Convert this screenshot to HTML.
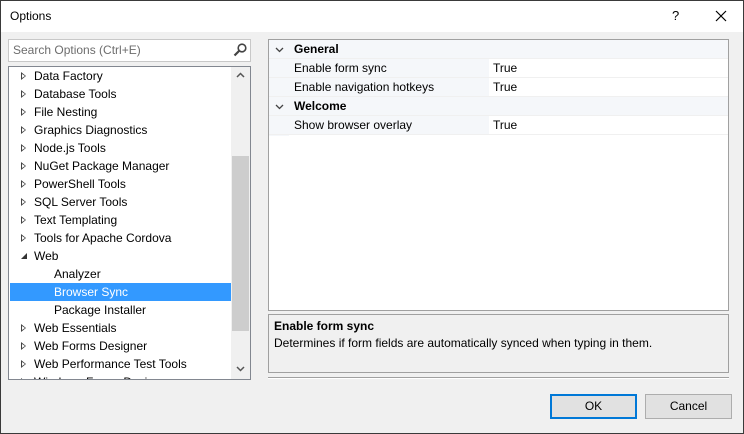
<!DOCTYPE html>
<html><head><style>
*{margin:0;padding:0;box-sizing:border-box}
body{width:744px;height:434px;overflow:hidden;font-family:"Liberation Sans",sans-serif;font-size:12px;color:#000;background:#f0f0f0;position:relative}
.win{position:absolute;left:0;top:0;width:744px;height:434px;border:1px solid #3a3a3a;background:#f0f0f0}
.title{position:absolute;left:0;top:0;width:742px;height:31px;background:#fff}
.abs{position:absolute}
.search{left:8px;top:39px;width:243px;height:23px;border:1px solid #c8c8c8;background:#fff;color:#6d6d6d;padding:3px 0 0 4px}
.tree{left:8px;top:66px;width:243px;height:314px;border:1px solid #828790;background:#fff;overflow:hidden}
.row{position:absolute;left:1px;width:221px;height:18px;line-height:18px}
.row .t{position:absolute;left:24px}
.row.c .t{left:44px}
.row .a{position:absolute;left:11px;top:5px;width:0;height:0;border-left:5px solid #444;border-top:4px solid transparent;border-bottom:4px solid transparent}
.row .a::after{content:"";position:absolute;left:-4px;top:-2px;border-left:3px solid #fff;border-top:2px solid transparent;border-bottom:2px solid transparent}
.sel{background:#3399ff;color:#fff}
.sb{position:absolute;left:222px;top:0;width:19px;height:312px;background:#f0f0f0}
.thumb{position:absolute;left:223px;top:89px;width:17px;height:175px;background:#cdcdcd}
.grid{left:268px;top:39px;width:461px;height:272px;border:1px solid #a0a0a0;background:#fff}
.gr{position:absolute;left:0;width:459px;height:19px;line-height:19px;border-bottom:1px solid #f0f0f0}
.hdr{background:#f5f7fa;font-weight:bold}
.nm{position:absolute;left:20px;width:200px;height:18px;background:#f5f7fa;padding-left:5px}
.vl{position:absolute;left:221px;padding-left:3px}
.desc{left:268px;top:314px;width:461px;height:59px;border:1px solid #a0a0a0;background:#f0f0f0;padding:4px 5px}
.btn{top:394px;width:87px;height:25px;border:1px solid #adadad;background:#e1e1e1;text-align:center;line-height:23px}
</style></head><body>
<div class="win">
<div class="title"></div>
<div class="abs" style="left:9px;top:8px;font-size:12px">Options</div>
<div class="abs" style="left:671px;top:7px;font-size:13px">?</div>
<svg class="abs" style="left:714px;top:9px" width="12" height="12"><path d="M1 1L11 11M11 1L1 11" stroke="#000" stroke-width="1.2"/></svg>
</div>
<div class="abs search">Search Options (Ctrl+E)
<svg class="abs" style="left:224px;top:3px" width="14" height="14"><circle cx="9" cy="5" r="3.8" fill="none" stroke="#444" stroke-width="1.6"/><path d="M6.5 7.5L1.5 12.5" stroke="#444" stroke-width="2.2"/></svg></div>
<div class="abs tree">
<div class="row" style="top:0"><span class="a"></span><span class="t">Data Factory</span></div>
<div class="row" style="top:18px"><span class="a"></span><span class="t">Database Tools</span></div>
<div class="row" style="top:36px"><span class="a"></span><span class="t">File Nesting</span></div>
<div class="row" style="top:54px"><span class="a"></span><span class="t">Graphics Diagnostics</span></div>
<div class="row" style="top:72px"><span class="a"></span><span class="t">Node.js Tools</span></div>
<div class="row" style="top:90px"><span class="a"></span><span class="t">NuGet Package Manager</span></div>
<div class="row" style="top:108px"><span class="a"></span><span class="t">PowerShell Tools</span></div>
<div class="row" style="top:126px"><span class="a"></span><span class="t">SQL Server Tools</span></div>
<div class="row" style="top:144px"><span class="a"></span><span class="t">Text Templating</span></div>
<div class="row" style="top:162px"><span class="a"></span><span class="t">Tools for Apache Cordova</span></div>
<div class="row" style="top:180px"><svg class="abs" style="left:11px;top:6px" width="7" height="7"><path d="M6 0L6 6L0 6Z" fill="#333"/></svg><span class="t">Web</span></div>
<div class="row c" style="top:198px"><span class="t">Analyzer</span></div>
<div class="row c sel" style="top:216px"><span class="t">Browser Sync</span></div>
<div class="row c" style="top:234px"><span class="t">Package Installer</span></div>
<div class="row" style="top:252px"><span class="a"></span><span class="t">Web Essentials</span></div>
<div class="row" style="top:270px"><span class="a"></span><span class="t">Web Forms Designer</span></div>
<div class="row" style="top:288px"><span class="a"></span><span class="t">Web Performance Test Tools</span></div>
<div class="row" style="top:306px"><span class="a"></span><span class="t">Windows Forms Designer</span></div>
<div class="sb"></div><div class="thumb"></div>
<svg class="abs" style="left:227px;top:5px" width="9" height="6"><path d="M1 5L4.5 1.5L8 5" stroke="#555" stroke-width="1.5" fill="none"/></svg>
<svg class="abs" style="left:227px;top:299px" width="9" height="6"><path d="M1 1L4.5 4.5L8 1" stroke="#555" stroke-width="1.5" fill="none"/></svg>
</div>
<div class="abs grid">
<div class="abs" style="left:0;top:0;width:20px;height:96px;background:#f5f7fa"></div>
<div class="gr hdr" style="top:0"><span class="abs" style="left:25px">General</span></div>
<div class="gr" style="top:19px"><div class="nm">Enable form sync</div><div class="vl">True</div></div>
<div class="gr" style="top:38px"><div class="nm">Enable navigation hotkeys</div><div class="vl">True</div></div>
<div class="gr hdr" style="top:57px"><span class="abs" style="left:25px">Welcome</span></div>
<div class="gr" style="top:76px"><div class="nm">Show browser overlay</div><div class="vl">True</div></div>
<svg class="abs" style="left:6px;top:7px" width="9" height="6"><path d="M1 1L4.5 4.5L8 1" stroke="#444" stroke-width="1.3" fill="none"/></svg>
<svg class="abs" style="left:6px;top:64px" width="9" height="6"><path d="M1 1L4.5 4.5L8 1" stroke="#444" stroke-width="1.3" fill="none"/></svg>
</div>
<div class="abs desc"><div style="font-weight:bold">Enable form sync</div><div style="margin-top:3px">Determines if form fields are automatically synced when typing in them.</div></div>
<div class="abs" style="left:268px;top:377px;width:461px;height:2px;border-top:1px solid #a0a0a0;background:#fff"></div>
<div class="abs btn" style="left:550px;border:2px solid #0078d7;line-height:21px">OK</div>
<div class="abs btn" style="left:645px">Cancel</div>
</body></html>
